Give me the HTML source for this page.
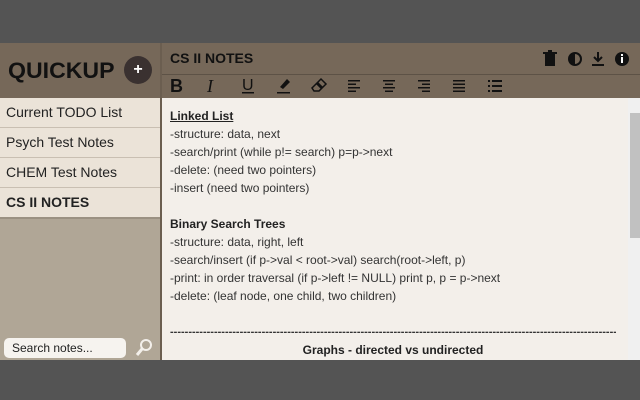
<!DOCTYPE html><html><head><style>
body{margin:0;width:640px;height:400px;background:#545454;position:relative;overflow:hidden;font-family:"Liberation Sans",sans-serif}
.app{position:absolute;left:0;top:43px;width:640px;height:317px;background:#b0a696}
.hdr{position:absolute;left:0;top:0;width:640px;height:55px;background:#766859}
.logo{position:absolute;left:8px;top:15px;font-size:22px;font-weight:bold;color:#111;letter-spacing:0px;transform:scaleX(1.05);transform-origin:left}
.plus{position:absolute;left:124px;top:13px;width:28px;height:28px;border-radius:50%;background:#3a3130;color:#fff;font-size:16px;text-align:center;line-height:27px;font-weight:bold}
.vline{position:absolute;left:160px;top:0;width:2px;height:317px;background:#6b5e50}
.title{position:absolute;left:170px;top:7px;font-size:14px;font-weight:bold;color:#111}
.tdiv{position:absolute;left:162px;top:31px;width:478px;height:1px;background:#5d5246}
.side{position:absolute;left:0;top:55px;width:160px}
.item{height:29px;border-bottom:1px solid #c9bfb2;background:#ebe3d8;font-size:14px;color:#222;padding-left:6px;line-height:29px}
.content{position:absolute;left:162px;top:55px;width:466px;height:262px;background:#f3efea;font-size:12px;color:#333;line-height:18px}
.content div{white-space:nowrap}
.sb{position:absolute;left:628px;top:55px;width:12px;height:262px;background:#f0f0f0}
.thumb{position:absolute;left:2px;top:15px;width:10px;height:125px;background:#c1c1c1}
.search{position:absolute;left:4px;top:295px;width:122px;height:20px;background:#f6f3ef;border-radius:5px;font-size:12px;color:#222;line-height:20px;padding-left:8px;box-sizing:border-box}
</style></head><body>
<div class="app">
<div class="hdr">
<div class="logo">QUICKUP</div>
<div class="plus">+</div>
<div class="title">CS II NOTES</div>
<div class="tdiv"></div>
<svg style="position:absolute;left:162px;top:31px" width="360" height="23" fill="#111" stroke="#111">
<text x="8" y="18" font-size="18" font-weight="bold" stroke="none" font-family="Liberation Sans">B</text>
<text x="45" y="18" font-size="18" font-style="italic" stroke="none" font-family="Liberation Serif">I</text>
<text x="80" y="16" font-size="16" stroke="none" font-family="Liberation Sans">U</text>
<rect x="80" y="18" width="12" height="1.5" stroke="none"/>
<path d="M118 13 L125 5 L128 8 L121 15Z" stroke="none"/><rect x="115" y="18" width="13" height="1.5" stroke="none"/>
<path d="M152 12 L159 5 L164 10 L157 17 H152 L150 14Z" fill="none" stroke-width="1.5"/><path d="M155 9 L160 14" stroke-width="3"/>
<g stroke="none">
<rect x="186" y="6" width="12" height="1.5"/><rect x="186" y="9.5" width="8" height="1.5"/><rect x="186" y="13" width="12" height="1.5"/><rect x="186" y="16.5" width="8" height="1.5"/>
<rect x="221" y="6" width="12" height="1.5"/><rect x="223" y="9.5" width="8" height="1.5"/><rect x="221" y="13" width="12" height="1.5"/><rect x="223" y="16.5" width="8" height="1.5"/>
<rect x="256" y="6" width="12" height="1.5"/><rect x="260" y="9.5" width="8" height="1.5"/><rect x="256" y="13" width="12" height="1.5"/><rect x="260" y="16.5" width="8" height="1.5"/>
<rect x="291" y="6" width="12" height="1.5"/><rect x="291" y="9.5" width="12" height="1.5"/><rect x="291" y="13" width="12" height="1.5"/><rect x="291" y="16.5" width="12" height="1.5"/>
<rect x="326" y="6" width="2" height="2"/><rect x="330" y="6" width="10" height="2"/><rect x="326" y="11" width="2" height="2"/><rect x="330" y="11" width="10" height="2"/><rect x="326" y="16" width="2" height="2"/><rect x="330" y="16" width="10" height="2"/>
</g>
</svg>
<svg style="position:absolute;left:542px;top:7px" width="90" height="18">
<rect x="3" y="4" width="10" height="12" fill="#111"/><rect x="1" y="2" width="14" height="2" fill="#111"/><rect x="6" y="0" width="4" height="2" fill="#111"/>
<circle cx="33" cy="9" r="6" fill="none" stroke="#111" stroke-width="2"/><path d="M33 3 A6 6 0 0 0 33 15Z" fill="#111"/>
<path d="M56 2 V11 M52 7 L56 11 L60 7 M50 15 H62" stroke="#111" stroke-width="2" fill="none"/>
<circle cx="80" cy="9" r="7" fill="#111"/><rect x="79" y="7" width="2" height="6" fill="#fff"/><rect x="79" y="4" width="2" height="2" fill="#fff"/>
</svg>
</div>
<div class="vline"></div>
<div class="side">
<div class="item">Current TODO List</div>
<div class="item">Psych Test Notes</div>
<div class="item">CHEM Test Notes</div>
<div class="item" style="font-weight:bold;border-bottom:2px solid #9b9182">CS II NOTES</div>
</div>
<div class="search">Search notes...</div>
<svg style="position:absolute;left:134px;top:295px" width="20" height="20"><circle cx="12" cy="7" r="5" fill="none" stroke="#f3efea" stroke-width="2"/><path d="M8 11 L3 17" stroke="#f3efea" stroke-width="3"/></svg>
<div class="content">
<div style="position:absolute;left:8px;top:9px">
<div style="font-weight:bold;text-decoration:underline;color:#222">Linked List</div>
<div>-structure: data, next</div>
<div>-search/print (while p!= search) p=p-&gt;next</div>
<div>-delete: (need two pointers)</div>
<div>-insert (need two pointers)</div>
<div>&nbsp;</div>
<div style="font-weight:bold;color:#222">Binary Search Trees</div>
<div>-structure: data, right, left</div>
<div>-search/insert (if p-&gt;val &lt; root-&gt;val) search(root-&gt;left, p)</div>
<div>-print: in order traversal (if p-&gt;left != NULL) print p, p = p-&gt;next</div>
<div>-delete: (leaf node, one child, two children)</div>
<div>&nbsp;</div>
<div style="overflow:hidden;width:446px;font-size:11px;font-weight:bold">--------------------------------------------------------------------------------------------------------------------------------</div>
<div style="font-weight:bold;color:#222;width:446px;text-align:center">Graphs - directed vs undirected</div>
</div>
</div>
<div class="sb"><div class="thumb"></div></div>
</div>
</body></html>
